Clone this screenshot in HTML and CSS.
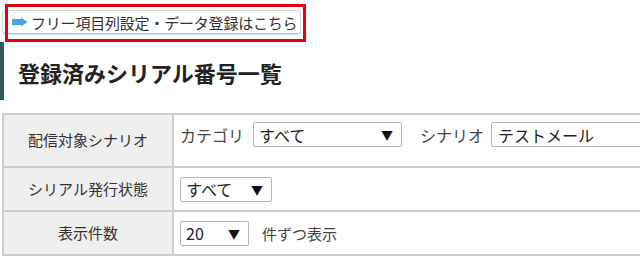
FILE: index.html
```html
<!DOCTYPE html>
<html>
<head>
    <title>登録済みシリアル番号一覧</title>
    <link rel="stylesheet" href="styles.css">
</head>
<body>
    <div class="page">
        <div class="link-wrap">
            <a class="link-btn" href="#">
                <svg class="arrow" width="16" height="10" viewBox="0 0 16 10">
                    <path d="M0 2.5 Q0 2 1 2 H9 V0.5 L15.5 5 L9 9.5 V8 H1 Q0 8 0 7.5 Z" fill="#4ba4e6"/>
                </svg>
                フリー項目列設定・データ登録はこちら
            </a>
            <div class="highlight"></div>
        </div>

        <h1 class="title">登録済みシリアル番号一覧</h1>

        <table class="search">
            <tr class="row-first">
                <th>配信対象シナリオ</th>
                <td>
                    <div class="field">
                        <span class="caption">カテゴリ</span>
                        <span class="select sel-cat">すべて<i>▼</i></span>
                        <span class="caption cap-scn">シナリオ</span>
                        <span class="input">テストメール</span>
                    </div>
                </td>
            </tr>
            <tr>
                <th>シリアル発行状態</th>
                <td>
                    <div class="field">
                        <span class="select sel-state">すべて<i>▼</i></span>
                    </div>
                </td>
            </tr>
            <tr>
                <th>表示件数</th>
                <td>
                    <div class="field">
                        <span class="select sel-num">20<i>▼</i></span>
                        <span class="caption cap-unit">件ずつ表示</span>
                    </div>
                </td>
            </tr>
        </table>
    </div>
</body>
</html>
```

FILE: styles.css
```css
* {
    margin: 0;
    padding: 0;
    box-sizing: border-box;
}

body {
    font-family: "Noto Sans CJK JP", "Noto Sans", sans-serif;
    color: #333;
    background: #fff;
}

.page {
    width: 640px;
    overflow: hidden;
}

.link-wrap {
    position: relative;
    height: 42px;
    padding-top: 10px;
    padding-left: 2px;
}

.link-btn {
    display: flex;
    align-items: center;
    width: 299px;
    height: 24px;
    padding-left: 9px;
    border: 1px solid #d4d4d4;
    border-bottom-color: #a9c9e6;
    border-radius: 4px;
    box-shadow: 0 1px 1px #c3dcf0;
    color: #333;
    font-size: 15px;
    text-decoration: none;
    white-space: nowrap;
    letter-spacing: -0.2px;
}

.arrow {
    margin-right: 3px;
}

.highlight {
    position: absolute;
    left: 5px;
    top: 4px;
    width: 301px;
    height: 38px;
    border: 3px solid #e4000f;
}

.title {
    height: 58px;
    display: flex;
    align-items: center;
    padding-left: 14px;
    padding-top: 1px;
    border-left: 4px solid #2e5a5b;
    font-size: 22px;
    font-weight: bold;
    color: #222;
}

.search {
    margin-top: 13px;
    margin-left: 2px;
    width: 638px;
    table-layout: fixed;
    border-collapse: collapse;
    border: 2px solid #cdcdcd;
    border-right: none;
}

.search th,
.search td {
    border: 2px solid #cdcdcd;
    height: 44px;
}

.search td {
    border-right: none;
}

.search .row-first th,
.search .row-first td {
    height: 53px;
}

.search th {
    width: 170px;
    background: #efefef;
    font-size: 15px;
    font-weight: normal;
    color: #333;
    padding-bottom: 2px;
}

.search td {
    background: #fff;
    padding-left: 6px;
    vertical-align: middle;
}

.row-first td {
    vertical-align: top;
    padding-top: 7px;
}

.field {
    display: flex;
    align-items: center;
    white-space: nowrap;
    overflow: hidden;
}

.caption {
    font-size: 16px;
    color: #444;
}

.select,
.input {
    display: flex;
    align-items: center;
    flex-shrink: 0;
    height: 25px;
    border: 1px solid #b5b5b5;
    border-radius: 2px;
    background: #fff;
    font-size: 16px;
    color: #222;
    padding-left: 5px;
}

.select i {
    font-style: normal;
    font-size: 12px;
    margin-left: auto;
    margin-right: 8px;
    color: #111;
}

.sel-cat {
    width: 149px;
    margin-left: 9px;
}

.cap-scn {
    margin-left: 18px;
}

.input {
    width: 170px;
    margin-left: 7px;
    padding-left: 6px;
}

.sel-state {
    width: 92px;
}

.sel-num {
    width: 69px;
}

.cap-unit {
    margin-left: 13px;
    font-size: 15px;
}
```
